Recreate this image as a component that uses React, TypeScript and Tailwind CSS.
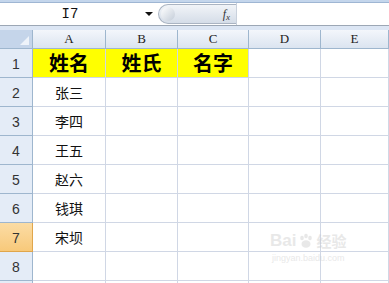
import React from 'react';

const cols = ['A', 'B', 'C', 'D', 'E'];
const names = ['张三', '李四', '王五', '赵六', '钱琪', '宋坝'];
const colW = ['w-[73px]', 'w-[72px]', 'w-[71px]', 'w-[72px]', 'w-[68px]'];

const cjk = "font-['Noto_Sans_CJK_SC',sans-serif]";

export default function App() {
  const rows = Array.from({ length: 9 }, (_, i) => i + 1);

  return (
    <div className="relative w-[389px] h-[283px] overflow-hidden bg-white">
      {/* ribbon edge */}
      <div className="h-[3px] bg-[#c4d6ec] border-b border-[#9fb6d3]" />

      {/* formula bar */}
      <div className="flex h-[23px] bg-white border-b border-[#9ca7b5]">
        <div className="w-[140px] flex items-center justify-center font-['Liberation_Mono',monospace] text-[14px] text-[#111]">
          I7
        </div>
        <div className="w-[18px] flex items-center justify-center">
          <div className="w-0 h-0 border-l-[4px] border-r-[4px] border-t-[4px] border-l-transparent border-r-transparent border-t-[#111]" />
        </div>
        <div className="relative w-[78px] my-[1px] flex items-center justify-end pr-[6px] rounded-l-full border border-r-0 border-[#aab4c2] bg-gradient-to-b from-[#f1f4f8] to-[#d5dde8]">
          <div className="absolute left-[2px] top-[2px] w-[14px] h-[14px] rounded-full bg-gradient-to-br from-[#ffffff] to-[#c3ccd8]" />
          <span className="font-['Liberation_Serif',serif] italic text-[12px] text-[#333]">
            f<sub className="text-[9px]">x</sub>
          </span>
        </div>
        <div className="flex-1 border-l border-[#c9d1dc]" />
      </div>

      <div className="h-[4px] bg-[#dce6f4]" />

      {/* column headers */}
      <div className="flex h-[19px]">
        <div className="relative w-[33px] bg-[#c5d5ea] border-r border-b border-[#9eb6ce]">
          <div
            className="absolute right-[3px] bottom-[3px] w-0 h-0"
            style={{ borderBottom: '9px solid #eef3fa', borderLeft: '9px solid transparent' }}
          />
        </div>
        {cols.map((c, i) => (
          <div
            key={c}
            className={`${colW[i]} flex items-center justify-center bg-gradient-to-b from-[#f3f6fb] to-[#dbe4f0] border-r border-b border-[#9eb6ce] font-['Liberation_Serif',serif] text-[13px] text-[#222]`}
          >
            {c}
          </div>
        ))}
      </div>

      {/* rows */}
      {rows.map((r) => (
        <div key={r} className="flex h-[29px]">
          <div
            className={`w-[33px] flex items-end justify-center pb-[2px] border-r border-b font-['Liberation_Sans',sans-serif] text-[14px] ${
              r === 7
                ? 'bg-gradient-to-b from-[#fbdca4] to-[#f8c97a] border-[#e0a64c] text-[#333]'
                : 'bg-[#e4ecf7] border-[#9eb6ce] text-[#333]'
            }`}
          >
            {r < 9 ? r : ''}
          </div>
          {cols.map((c, i) => {
            const yellow = r === 1 && i < 3;
            let text = '';
            if (r === 1) text = ['姓名', '姓氏', '名字'][i] ?? '';
            else if (i === 0 && r - 2 < names.length) text = names[r - 2];
            return (
              <div
                key={c}
                className={`${colW[i]} flex items-center justify-center border-r border-b border-[#d0d7e5] ${
                  yellow ? 'bg-[#ffff00]' : ''
                } ${cjk} ${r === 1 ? 'text-[20px] font-bold text-black' : 'text-[14px] text-[#111]'}`}
              >
                {text}
              </div>
            );
          })}
        </div>
      ))}

      {/* watermark */}
      <div className="absolute left-[270px] top-[228px] flex flex-col items-center opacity-40 pointer-events-none select-none">
        <div className="flex items-center gap-[2px]">
          <span className="font-['Liberation_Sans',sans-serif] text-[17px] font-bold text-[#c8c8c8]">Bai</span>
          <svg width="16" height="16" viewBox="0 0 16 16">
            <g fill="#c8c8c8">
              <ellipse cx="4" cy="5" rx="1.8" ry="2.3" />
              <ellipse cx="8" cy="3" rx="1.8" ry="2.3" />
              <ellipse cx="12" cy="5" rx="1.8" ry="2.3" />
              <ellipse cx="8" cy="11" rx="4.5" ry="3.8" />
            </g>
          </svg>
          <span className={`${cjk} text-[15px] font-bold text-[#c8c8c8]`}>经验</span>
        </div>
        <span className="font-['Liberation_Sans',sans-serif] text-[9px] text-[#c8c8c8] -mt-[2px]">jingyan.baidu.com</span>
      </div>
    </div>
  );
}
